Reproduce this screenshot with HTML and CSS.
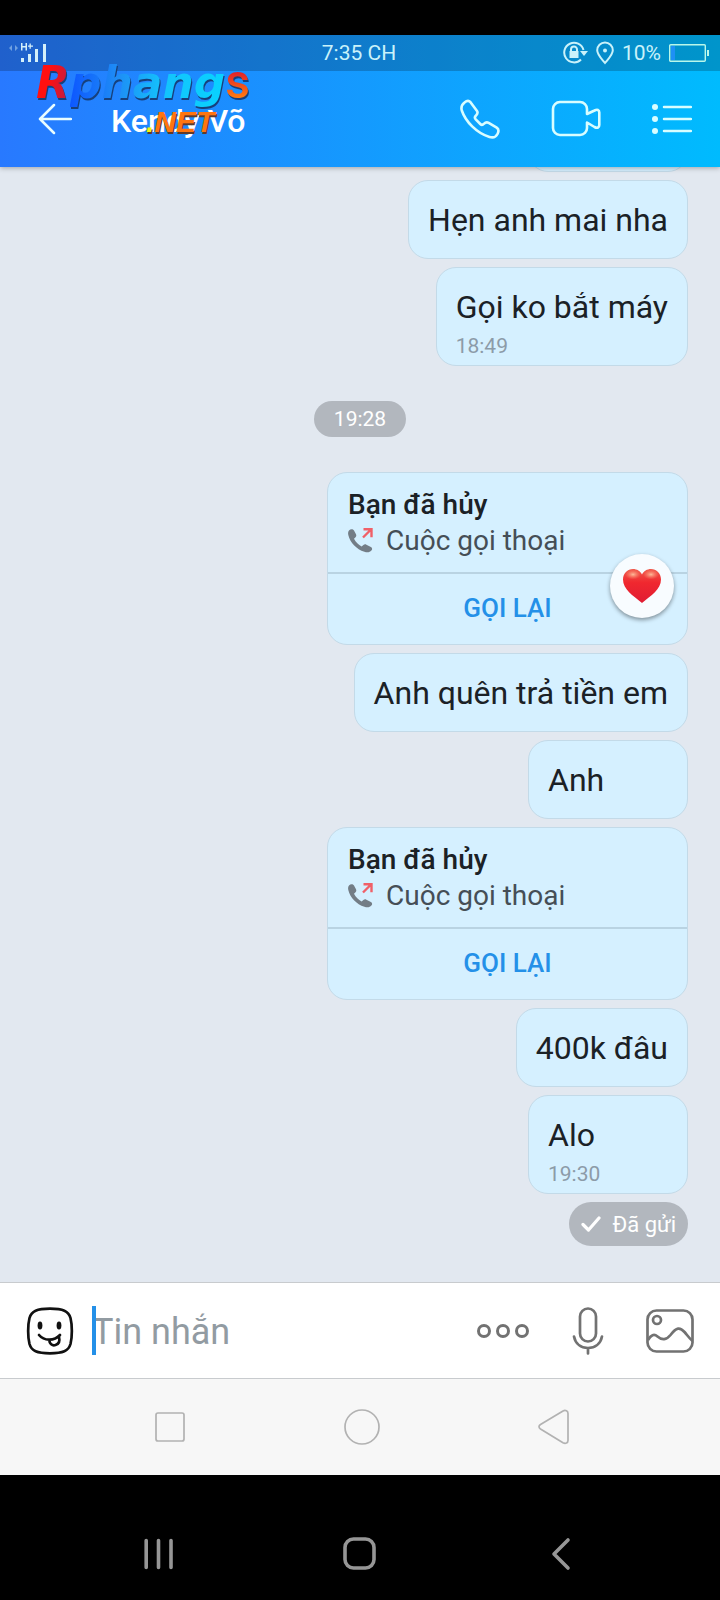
FILE: index.html
```
<!DOCTYPE html>
<html lang="vi">
<head>
<meta charset="utf-8">
<meta name="viewport" content="width=device-width, initial-scale=1">
<title>Kendy Võ</title>
<link rel="stylesheet" href="styles.css">
</head>
<body>
<div class="top">
  <div class="status">
    <svg class="signal" width="38" height="24" viewBox="0 0 38 24" fill="#d4f0fa">
      <path d="M3 4v6l-3-3zM6 4v6l3-3z" opacity=".45"/>
      <path d="M12 2h1.500v3h3V2H18v7.500h-1.500V6.500h-3v3H12zM20.500 2.500h1.300v2H24v1.300h-2.200v2h-1.300v-2H19V4.500h1.500z"/>
      <path d="M12 17h3v4h-3zM19 13h3v8h-3zM26 8h3v13h-3zM34 3h3v18h-3z"/>
    </svg>
    <span class="clock">7:35 CH</span>
    <div class="status-right">
      <svg width="25" height="24" viewBox="0 0 25 24" fill="none" stroke="#c9f2fa" stroke-width="2">
        <path d="M20.500 9A9.800 9.800 0 1 0 18 18.500"/>
        <path d="M17 10h8l-4 5z" fill="#c9f2fa" stroke="none"/>
        <path d="M6.500 10h9v7h-9z" fill="#c9f2fa" stroke="none"/>
        <path d="M8 11V8.500a3 3 0 0 1 6 0V11"/>
      </svg>
      <svg width="18" height="24" viewBox="0 0 18 24" fill="none" stroke="#c9f2fa" stroke-width="2">
        <path d="M9 22C5 17 1.200 13.500 1.200 9.200a7.800 7.800 0 0 1 15.600 0C16.800 13.500 13 17 9 22z"/>
        <circle cx="9" cy="9.500" r="2" fill="#c9f2fa" stroke="none"/>
      </svg>
      <span class="percent">10%</span>
      <svg class="battery" width="40" height="18" viewBox="0 0 40 18">
        <rect x=".7" y=".7" width="35.600" height="16.600" rx="1" fill="none" stroke="#b9f7ea" stroke-width="1.400"/>
        <rect x="2" y="2" width="4" height="14" fill="#1e90f5"/>
        <rect x="38" y="6" width="2" height="6" fill="#b9f7ea"/>
      </svg>
    </div>
  </div>
  <header class="header">
    <button class="icon-button" aria-label="Quay lại">
      <svg width="34" height="32" viewBox="0 0 34 32" fill="none" stroke="#e8fdff" stroke-width="2.500" stroke-linecap="round" stroke-linejoin="round"><path d="M16 2L2 16l14 14M2 16h31"/></svg>
    </button>
    <h1 class="name">Kendy Võ</h1>
    <button class="icon-button" aria-label="Gọi thoại">
      <svg width="40" height="40" viewBox="0 0 40 40" fill="none" stroke="#d8fdff" stroke-width="2.600" stroke-linejoin="round"><path d="M4.500 3.500C6.500 1.800 9 1.500 10.500 3.200L17 12c1 1.500.5 3-1 4.500-1.600 1.500-1.500 2.500-.3 3.800l4.600 4.700c1.300 1.300 2.500 1 3.800-.3 1.400-1.500 3-1.700 4.600-.8l8 4.800c2.300 1.500 2 4 .8 6.300-1.500 3-4.500 4-8 3C16.500 34 5.500 22.500 1.800 11.500.8 8 2 5.500 4.500 3.500z"/></svg>
    </button>
    <button class="icon-button" aria-label="Gọi video">
      <svg width="50" height="38" viewBox="0 0 50 38" fill="none" stroke="#d8fdff" stroke-width="2.600" stroke-linejoin="round"><path d="M36 14V9a7 7 0 0 0-7-7H9a7 7 0 0 0-7 7v19a7 7 0 0 0 7 7h20a7 7 0 0 0 7-7v-5.500l7.500 4.500c3 1.500 4.800.5 4.800-2V12.500c0-2.700-2-3.500-4.800-2L36 14z"/></svg>
    </button>
    <button class="icon-button" aria-label="Tùy chọn">
      <svg width="40" height="32" viewBox="0 0 40 32" fill="#d8fdff"><circle cx="3" cy="4" r="3"/><circle cx="3" cy="16" r="3"/><circle cx="3" cy="28" r="3"/><path d="M12 4h27M12 16h27M12 28h27" stroke="#d8fdff" stroke-width="2.500" stroke-linecap="round"/></svg>
    </button>
  </header>
  <div class="brand">
    <div class="brand-main"><span class="brand-r">R</span><span class="brand-mid">phang</span><span class="brand-s">s</span></div>
    <div class="brand-net"><span class="brand-dot">.</span>NET</div>
  </div>
</div>

<main class="chat">
  <div class="bubble"></div>
  <div class="bubble"><p class="text">Hẹn anh mai nha</p></div>
  <div class="bubble timed"><p class="text">Gọi ko bắt máy</p><time class="time">18:49</time></div>
  <time class="divider-time">19:28</time>
  <article class="call">
    <div class="call-info">
      <h2 class="call-title">Bạn đã hủy</h2>
      <p class="call-kind">
        <svg width="25" height="26" viewBox="0 0 25 26"><path d="M1 2.500C2.500.8 5 1 6 2.500l2 3.700c.6 1.300.3 2.300-.7 3.300L6 10.800c1.800 3.400 4.500 6 7.600 7.800l1.800-1.600c1-.8 2-.8 3-.3l4.500 2.400c1.500.8 1.600 2.300.5 3.500-1.500 1.800-4 2.200-7 1.200C8.500 21.200 2 14.500.3 7-.1 5.200 0 3.700 1 2.500z" fill="#737d86"/><path d="M15 9.500l8-8M15.500 1.200H23.500v8" fill="none" stroke="#f06068" stroke-width="2.400"/></svg>
        Cuộc gọi thoại
      </p>
    </div>
    <button class="call-back">GỌI LẠI</button>
    <button class="reaction" aria-label="Thả tim">
      <svg width="40" height="36" viewBox="0 0 40 36">
        <defs>
          <linearGradient id="heart" x1="0" y1="0" x2="0" y2="1"><stop offset="0" stop-color="#ef5a4c"/><stop offset=".4" stop-color="#f0282f"/><stop offset="1" stop-color="#e01c33"/></linearGradient>
          <radialGradient id="shine"><stop offset="0" stop-color="#ffc9a4" stop-opacity=".9"/><stop offset="1" stop-color="#ff8a70" stop-opacity="0"/></radialGradient>
        </defs>
        <path d="M20 35C11 27.500 1 21.500 1 11.500 1 5.500 5.500 1 11 1c4 0 7.300 2.200 9 5.500C21.700 3.200 25 1 29 1c5.500 0 10 4.500 10 10.500C39 21.500 29 27.500 20 35z" fill="url(#heart)"/>
        <ellipse cx="11" cy="6.500" rx="8" ry="5" fill="url(#shine)"/><ellipse cx="29" cy="6.500" rx="8" ry="5" fill="url(#shine)"/>
      </svg>
    </button>
  </article>
  <div class="bubble"><p class="text">Anh quên trả tiền em</p></div>
  <div class="bubble"><p class="text">Anh</p></div>
  <article class="call">
    <div class="call-info">
      <h2 class="call-title">Bạn đã hủy</h2>
      <p class="call-kind">
        <svg width="25" height="26" viewBox="0 0 25 26"><path d="M1 2.500C2.500.8 5 1 6 2.500l2 3.700c.6 1.300.3 2.300-.7 3.300L6 10.800c1.800 3.400 4.500 6 7.600 7.800l1.800-1.600c1-.8 2-.8 3-.3l4.500 2.400c1.500.8 1.600 2.300.5 3.500-1.500 1.800-4 2.200-7 1.200C8.500 21.200 2 14.500.3 7-.1 5.200 0 3.700 1 2.500z" fill="#737d86"/><path d="M15 9.500l8-8M15.500 1.200H23.500v8" fill="none" stroke="#f06068" stroke-width="2.400"/></svg>
        Cuộc gọi thoại
      </p>
    </div>
    <button class="call-back">GỌI LẠI</button>
  </article>
  <div class="bubble"><p class="text">400k đâu</p></div>
  <div class="bubble timed"><p class="text">Alo</p><time class="time">19:30</time></div>
  <div class="sent">
    <svg width="20" height="16" viewBox="0 0 20 16" fill="none" stroke="#fff" stroke-width="3.200" stroke-linecap="round" stroke-linejoin="round"><path d="M2 8.500L7.500 14 18 2"/></svg>
    <span>Đã gửi</span>
  </div>
</main>

<form class="composer">
  <button type="button" class="icon-button" aria-label="Nhãn dán">
    <svg width="48" height="48" viewBox="0 0 48 48" fill="none" stroke="#111" stroke-width="2.700" stroke-linecap="round">
      <path d="M24 1.700C37 1.700 42.500 4 44.500 11c1.800 7 1.800 19 0 26-2 7-7.500 9.300-20.500 9.300S5.500 44 3.500 37c-1.800-7-1.800-19 0-26C5.500 4 11 1.700 24 1.700z"/>
      <ellipse cx="14" cy="18.500" rx="2.400" ry="4" fill="#111" stroke="none"/><ellipse cx="33" cy="18.500" rx="2.400" ry="4" fill="#111" stroke="none"/>
      <path d="M13 28c5 6 15 6.500 21 0M23.500 32.500c-.5 4.500 3 6.500 6 5.500 3.500-1 4.500-4 3.500-8"/>
    </svg>
  </button>
  <div class="field">
    <input class="input" type="text" placeholder="Tin nhắn" aria-label="Tin nhắn">
    <span class="caret"></span>
  </div>
  <button type="button" class="icon-button" aria-label="Thêm">
    <svg width="54" height="16" viewBox="0 0 54 16" fill="none" stroke="#727272" stroke-width="3"><circle cx="8" cy="8" r="5.500"/><circle cx="27" cy="8" r="5.500"/><circle cx="46" cy="8" r="5.500"/></svg>
  </button>
  <button type="button" class="icon-button" aria-label="Ghi âm">
    <svg width="32" height="48" viewBox="0 0 32 48" fill="none" stroke="#727272" stroke-width="2.700" stroke-linecap="round"><rect x="8" y="1.500" width="16" height="33" rx="8"/><path d="M2 29.500C3.500 37 9 41 16 41s12.500-4 14-11.500M16 41v5.500"/></svg>
  </button>
  <button type="button" class="icon-button" aria-label="Gửi ảnh">
    <svg width="48" height="44" viewBox="0 0 48 44" fill="none" stroke="#727272" stroke-width="2.700"><rect x="1.500" y="1.500" width="45" height="41" rx="9"/><circle cx="11" cy="11" r="4"/><path d="M2 31c3-5 6-6.500 9.500-3.500 4.500 4 9 3.500 13-1.500 6-8 9.500-8 14-3 3 3.500 5 6.500 8 9"/></svg>
  </button>
</form>

<nav class="nav nav-light">
  <button class="nav-button" aria-label="Ứng dụng gần đây"><svg width="36" height="36" viewBox="0 0 36 36"><rect x="4" y="4" width="28" height="28" rx="2"/></svg></button>
  <button class="nav-button" aria-label="Màn hình chính"><svg width="36" height="36" viewBox="0 0 36 36"><circle cx="18" cy="18" r="17"/></svg></button>
  <button class="nav-button" aria-label="Trở về"><svg width="36" height="36" viewBox="0 0 36 36"><path d="M4.500 15.500L27 2c2.500-1.300 5 0 5 2.500v27c0 2.500-2.500 3.500-5 2.200L4.500 20c-2-1.300-2-3.200 0-4.500z"/></svg></button>
</nav>
<nav class="nav nav-dark">
  <button class="nav-button" aria-label="Đa nhiệm"><svg width="36" height="36" viewBox="0 0 36 36"><path d="M5.200 4.500v27M17.500 4.500v27M30 4.500v27"/></svg></button>
  <button class="nav-button" aria-label="Trang chủ"><svg width="36" height="36" viewBox="0 0 36 36"><rect x="3" y="3" width="29" height="29" rx="8.500"/></svg></button>
  <button class="nav-button" aria-label="Lùi"><svg width="36" height="36" viewBox="0 0 36 36"><path d="M25 4L11 18l14 14"/></svg></button>
</nav>
</body>
</html>
```
FILE: styles.css
```
* { box-sizing: border-box; }
body {
  margin: 0;
  height: 100vh;
  padding-top: 35px;
  display: flex;
  flex-direction: column;
  background: #000;
  font-family: Roboto, "Liberation Sans", sans-serif;
  color: #1b2126;
}
button {
  border: 0;
  padding: 0;
  margin: 0;
  background: none;
  font: inherit;
  color: inherit;
}
svg { display: block; }
h1, h2, p { margin: 0; }

.top {
  position: relative;
  z-index: 1;
  background: linear-gradient(90deg, #2879ff, #00bbfe);
  box-shadow: 0 1px 5px rgba(0, 0, 0, .3);
}
.status {
  display: grid;
  grid-template-columns: 1fr auto 1fr;
  align-items: center;
  height: 36px;
  padding: 0 11px 0 9px;
  background: rgba(0, 0, 0, .2);
  color: #c9f2fa;
  font-size: 21px;
}
.status-right {
  display: flex;
  align-items: center;
  justify-content: flex-end;
  gap: 8px;
}
.header {
  display: flex;
  align-items: center;
  height: 96px;
  padding: 0 28px 0 38px;
  gap: 51px;
}
.name {
  flex: 1;
  margin-left: -12px;
  padding-top: 3px;
  font-size: 32px;
  line-height: 36px;
  font-weight: 500;
  color: #fff;
}
.icon-button { flex: none; }

.brand {
  position: absolute;
  left: 36px;
  top: 21px;
  font-weight: bold;
  font-style: italic;
}
.brand-main {
  display: flex;
  align-items: baseline;
  font: italic bold 44px/52px "DejaVu Sans", sans-serif;
  filter: drop-shadow(1px 2px 0 #17407c);
}
.brand-main span {
  background-clip: text;
  -webkit-background-clip: text;
  color: transparent;
}
.brand-r { background-image: linear-gradient(100deg, #ff1010 40%, #b02050); }
.brand-mid { background-image: linear-gradient(90deg, #0d57ff, #1e8cf5 30%, #14c3fc 60%, #08d2ff); }
.brand-s {
  background-image: linear-gradient(#e0202a 30%, #ff7a10 80%);
  font: 500 48px/52px Roboto, sans-serif;
}
.brand-net {
  position: absolute;
  left: 110px;
  top: 48px;
  font: italic bold 30px/36px "Liberation Sans", sans-serif;
  color: #ff7510;
  text-shadow: 1px 2px 0 #5f3b2c;
}
.brand-dot { color: #f5f50a; }

.chat {
  flex: 1;
  min-height: 0;
  overflow: hidden;
  display: flex;
  flex-direction: column;
  align-items: flex-end;
  justify-content: flex-end;
  gap: 8px;
  padding: 0 32px 36px;
  background: #e2e8f0;
}
.chat > * { flex: none; }
.bubble, .call {
  background: #d5f0ff;
  border: 1px solid #c3dae8;
  border-radius: 20px;
}
.bubble {
  min-width: 160px;
  min-height: 79px;
  padding: 19px 19px 18px;
}
.timed { padding-bottom: 6px; }
.text { font-size: 32px; line-height: 40px; }
.time {
  display: block;
  margin-top: 6px;
  font-size: 21px;
  line-height: 26px;
  color: #8c9ba8;
}
.divider-time {
  align-self: center;
  margin: 27px 0;
  padding: 0 20px;
  border-radius: 18px;
  background: #b2b7be;
  color: #fff;
  font-size: 21px;
  line-height: 36px;
}
.call { position: relative; width: 55%; min-width: 361px; }
.call-info {
  padding: 14px 20px 13px;
  border-bottom: 2px solid #b9d3e2;
}
.call-title { font-size: 28px; line-height: 36px; font-weight: 500; }
.call-kind {
  display: flex;
  align-items: center;
  gap: 13px;
  font-size: 28px;
  line-height: 36px;
  color: #454e56;
}
.call-back {
  display: block;
  width: 100%;
  height: 70px;
  padding-bottom: 2px;
  font-size: 26px;
  font-weight: 500;
  color: #2490e8;
}
.reaction {
  position: absolute;
  right: 13px;
  top: 81px;
  width: 64px;
  height: 64px;
  display: grid;
  place-items: center;
  border-radius: 50%;
  background: #f8fcff;
  box-shadow: 0 2px 4px rgba(0, 0, 0, .4);
}
.sent {
  display: flex;
  align-items: center;
  gap: 12px;
  height: 44px;
  padding: 0 12px;
  border-radius: 22px;
  background: #b2b7be;
  color: #fff;
  font-size: 22px;
}

.composer {
  display: flex;
  align-items: center;
  gap: 42px;
  height: 96px;
  padding: 0 26px;
  background: #fff;
  border-top: 1px solid #c8cbce;
}
.field {
  position: relative;
  flex: 1;
  min-width: 0;
  margin-left: -24px;
}
.input {
  display: block;
  width: 100%;
  height: 50px;
  padding: 3px 0 0;
  border: 0;
  outline: 0;
  background: none;
  font: 36px/46px Roboto, sans-serif;
}
.input::placeholder { color: #929ba2; opacity: 1; }
.caret {
  position: absolute;
  left: 0;
  top: 0;
  width: 4px;
  height: 49px;
  background: #2490e8;
}

.nav {
  display: flex;
  align-items: center;
  justify-content: space-between;
}
.nav svg { fill: none; stroke-linecap: round; stroke-linejoin: round; }
.nav-light {
  height: 97px;
  padding: 0 148px 0 152px;
  background: #f7f7f7;
  border-top: 1px solid #c8cbce;
}
.nav-light svg { stroke: #b2b2b2; stroke-width: 1.700; }
.nav-dark {
  height: 125px;
  padding: 32px 141px 0;
}
.nav-dark svg { stroke: #969696; stroke-width: 3.600; }
```
